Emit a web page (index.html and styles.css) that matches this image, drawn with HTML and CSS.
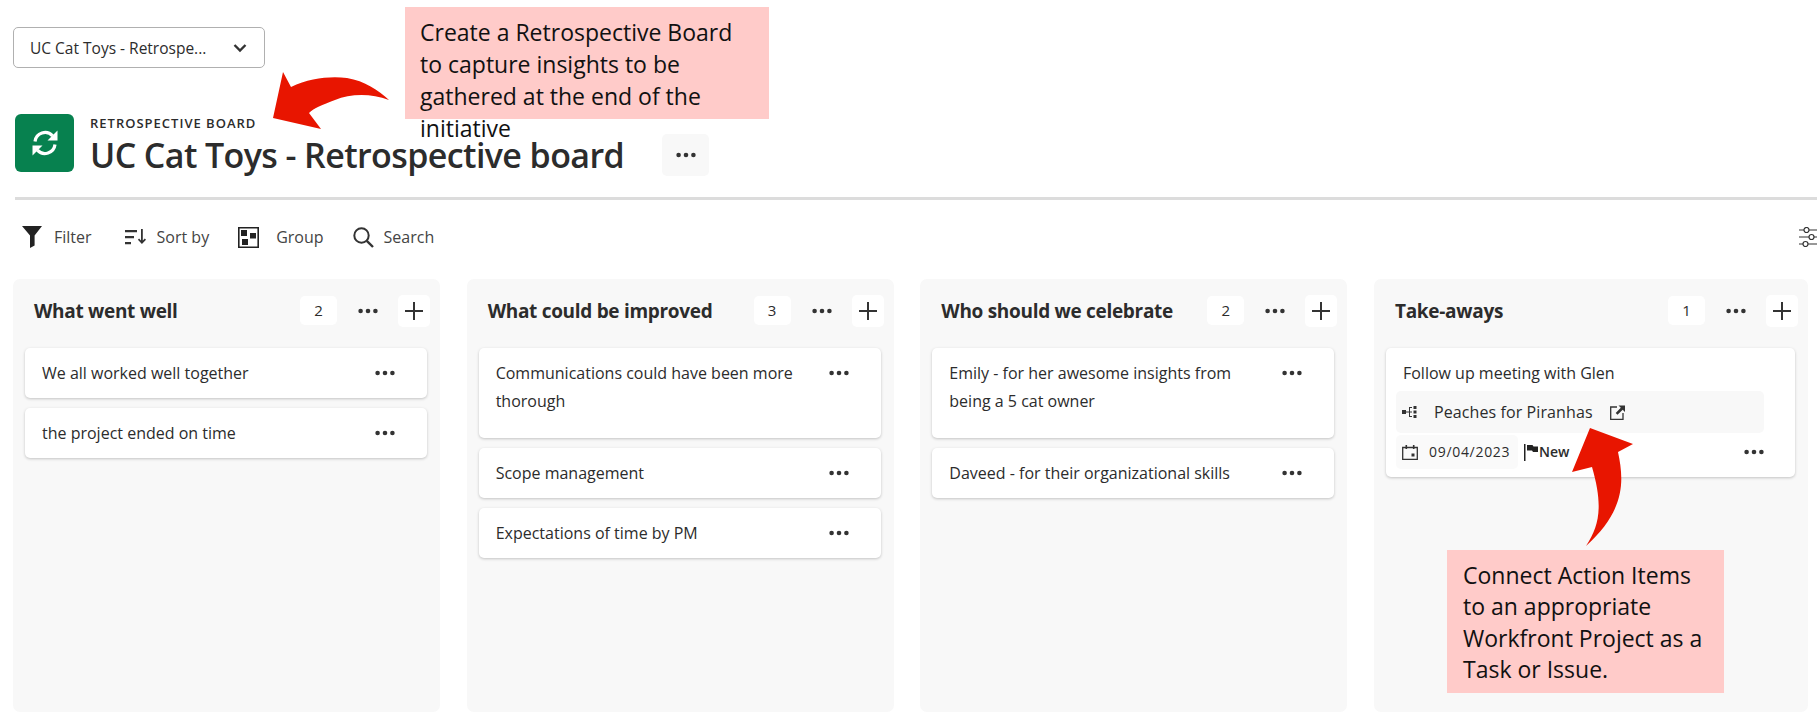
FILE: index.html
```html
<!DOCTYPE html>
<html>
  <head>
    <title>UC Cat Toys - Retrospective board</title>
    <link rel="stylesheet" href="styles.css">
  </head>
  <body>
    <svg class="defs" width="0" height="0">
      <symbol id="dots" viewBox="0 0 20 6">
        <circle cx="2.6" cy="3" r="2.3"/><circle cx="10" cy="3" r="2.3"/><circle cx="17.4" cy="3" r="2.3"/>
      </symbol>
      <symbol id="plus" viewBox="0 0 20 20">
        <path d="M9 1h2v8h8v2h-8v8H9v-8H1V9h8z"/>
      </symbol>
    </svg>

    <div class="picker">
      <span class="picker-text">UC Cat Toys - Retrospe...</span>
      <svg class="chevron" viewBox="0 0 14 10"><path d="M1.5 2 7 7.5 12.5 2" fill="none" stroke="#333" stroke-width="2.4"/></svg>
    </div>

    <div class="board-head">
      <div class="logo">
        <svg viewBox="0 0 28 28" width="28" height="28">
          <path d="M4 12.5A10.2 10.2 0 0 1 21.6 6.8" fill="none" stroke="#fff" stroke-width="3.2"/>
          <path d="M26.5 1.5V11.5H16.5z" fill="#fff"/>
          <path d="M24 15.5A10.2 10.2 0 0 1 6.4 21.2" fill="none" stroke="#fff" stroke-width="3.2"/>
          <path d="M1.5 26.5V16.5H11.5z" fill="#fff"/>
        </svg>
      </div>
      <div class="titles">
        <div class="eyebrow">RETROSPECTIVE BOARD</div>
        <h1>UC Cat Toys - Retrospective board</h1>
      </div>
      <div class="more"><svg class="dots"><use href="#dots"/></svg></div>
    </div>

    <div class="divider"></div>

    <div class="toolbar">
      <div class="tool tool-filter">
        <svg width="20" height="22" viewBox="0 0 20 22"><path d="M0 0h20L12.6 9.4V19.5L8 22V9.4z" fill="#222"/></svg>
        <span>Filter</span>
      </div>
      <div class="tool tool-sort">
        <svg width="21" height="16" viewBox="0 0 21 16"><path d="M0 1h12v2.2H0zM0 7h9v2.2H0zM0 13h6v2.2H0zM16 0h1.8v11.5l2-2 1.2 1.2-4.1 4.3-4-4.3 1.2-1.2 1.9 2z" fill="#333"/></svg>
        <span>Sort by</span>
      </div>
      <div class="tool tool-group">
        <svg width="21" height="21" viewBox="0 0 21 21"><path d="M.8.8h19.4v19.4H.8z" fill="none" stroke="#222" stroke-width="1.6"/><path d="M3 3h6v6H3zM12 6h6v5.500h-6zM4 12h6v6H4z" fill="#222"/></svg>
        <span>Group</span>
      </div>
      <div class="tool tool-search">
        <svg width="21" height="21" viewBox="0 0 21 21"><circle cx="8.500" cy="8.500" r="7.200" fill="none" stroke="#333" stroke-width="2"/><path d="M13.800 13.800 20 20" fill="none" stroke="#333" stroke-width="2.400"/></svg>
        <span>Search</span>
      </div>
      <svg class="tool-settings" width="19" height="20" viewBox="0 0 19 20">
        <g fill="none" stroke="#333" stroke-width="1.200">
          <path d="M0 3h5M10 3h9M0 10h10M15 10h4M0 17h4M9 17h10"/>
          <circle cx="7.500" cy="3" r="2.500"/><circle cx="12.500" cy="10" r="2.500"/><circle cx="6.500" cy="17" r="2.500"/>
        </g>
      </svg>
    </div>

    <div class="board">
      <div class="column">
        <div class="column-head">
          <h2>What went well</h2>
          <span class="count">2</span>
          <svg class="dots"><use href="#dots"/></svg>
          <span class="add"><svg><use href="#plus"/></svg></span>
        </div>
        <div class="card"><p>We all worked well together</p><svg class="dots"><use href="#dots"/></svg></div>
        <div class="card"><p>the project ended on time</p><svg class="dots"><use href="#dots"/></svg></div>
      </div>

      <div class="column">
        <div class="column-head">
          <h2>What could be improved</h2>
          <span class="count">3</span>
          <svg class="dots"><use href="#dots"/></svg>
          <span class="add"><svg><use href="#plus"/></svg></span>
        </div>
        <div class="card card-wrapped"><p>Communications could have been more thorough</p><svg class="dots"><use href="#dots"/></svg></div>
        <div class="card"><p>Scope management</p><svg class="dots"><use href="#dots"/></svg></div>
        <div class="card"><p>Expectations of time by PM</p><svg class="dots"><use href="#dots"/></svg></div>
      </div>

      <div class="column">
        <div class="column-head">
          <h2>Who should we celebrate</h2>
          <span class="count">2</span>
          <svg class="dots"><use href="#dots"/></svg>
          <span class="add"><svg><use href="#plus"/></svg></span>
        </div>
        <div class="card card-wrapped"><p>Emily - for her awesome insights from being a 5 cat owner</p><svg class="dots"><use href="#dots"/></svg></div>
        <div class="card"><p>Daveed - for their organizational skills</p><svg class="dots"><use href="#dots"/></svg></div>
      </div>

      <div class="column">
        <div class="column-head">
          <h2>Take-aways</h2>
          <span class="count">1</span>
          <svg class="dots"><use href="#dots"/></svg>
          <span class="add"><svg><use href="#plus"/></svg></span>
        </div>
        <div class="card card-action">
          <div class="action-title"><p>Follow up meeting with Glen</p></div>
          <div class="action-link">
            <svg width="15" height="12" viewBox="0 0 15 12"><path d="M0 4h4v4H0zM4 5.400h3V1h3v1H8v3.400h2v1.200H8V10h2v1H7V6.600H4zM11.500 0h3v3h-3zM11.500 4.500h3v3h-3zM11.500 9h3v3h-3z" fill="#333"/></svg>
            <span class="link-name">Peaches for Piranhas</span>
            <svg width="15" height="15" viewBox="0 0 15 15"><path d="M7 2H.7v12.300H13V8" fill="none" stroke="#333" stroke-width="1.300"/><path d="M8.500.5H15V7l-2.300-2.300L7.500 9.800 5.700 8l5.100-5.200z" fill="#333"/></svg>
          </div>
          <div class="action-meta">
            <div class="chip">
              <svg width="16" height="15" viewBox="0 0 16 15"><path d="M.7 2.500h14.600v11.800H.7z" fill="none" stroke="#333" stroke-width="1.300"/><path d="M3.500 0h1.600v4H3.500zM10.900 0h1.600v4h-1.600zM9.500 8.500h3v3h-3z" fill="#333"/></svg>
              <span class="date">09/04/2023</span>
            </div>
            <div class="status">
              <svg width="14" height="17" viewBox="0 0 14 17"><path d="M0 0h1.500v17H0z" fill="#222"/><path d="M3 1h5.500l1 1.500H14V8H9L8 6.500H3z" fill="#222"/></svg>
              <span>New</span>
            </div>
            <svg class="dots"><use href="#dots"/></svg>
          </div>
        </div>
      </div>
    </div>

    <!-- annotations on top of the screenshot -->
    <div class="note note-top">Create a Retrospective Board to capture insights to be gathered at the end of the initiative</div>
    <div class="note note-bottom">Connect Action Items to an appropriate Workfront Project as a Task or Issue.</div>
    <svg class="arrows" width="1817" height="712" viewBox="0 0 1817 712">
      <path d="M283 72 291 87C310 78 330 76 347 78 365 81 378 90 389 100 370 93 350 94 335 100 322 105 314 108 309 113L321 129 273 118Z"/>
      <path d="M1590 428 1633 444 1618 452C1624 480 1626 510 1586 546 1600 525 1603 505 1592 467L1572 472Z"/>
    </svg>
  </body>
</html>
```

FILE: styles.css
```css
html, body {
  margin: 0;
  height: 712px;
  overflow: hidden;
}
body {
  position: relative;
  background: #fff;
  color: #2c2c2c;
  font-family: "Open Sans", "Noto Sans", sans-serif;
}
.defs {
  position: absolute;
}
p, h1, h2 {
  margin: 0;
}

/**** top ****/
.picker {
  display: flex;
  align-items: center;
  justify-content: space-between;
  box-sizing: border-box;
  width: 252px;
  height: 41px;
  margin: 27px 0 0 13px;
  padding: 0 16px;
  border: 1.5px solid #b0b0b0;
  border-radius: 5px;
  font-size: 15.5px;
}
.chevron {
  width: 14px;
  height: 10px;
  margin-right: 1px;
}
.board-head {
  display: flex;
  align-items: flex-start;
  margin: 46px 0 0 15px;
  height: 58px;
}
.logo {
  display: flex;
  align-items: center;
  justify-content: center;
  width: 59px;
  height: 58px;
  border-radius: 6px;
  background: #07814f;
}
.titles {
  margin-left: 16px;
  width: 572px;
}
.eyebrow {
  font-size: 13px;
  font-weight: 600;
  line-height: 18px;
  letter-spacing: 1px;
}
h1 {
  font-size: 34px;
  font-weight: 600;
  line-height: 46px;
  letter-spacing: -.6px;
  white-space: nowrap;
}
.more {
  display: flex;
  align-items: center;
  justify-content: center;
  width: 47px;
  height: 42px;
  margin-top: 20px;
  border-radius: 5px;
  background: #f8f8f8;
}
.divider {
  height: 3px;
  margin: 25px 0 0 15px;
  background: #dcdcdc;
}

/**** toolbar ****/
.toolbar {
  display: flex;
  align-items: center;
  height: 74px;
  margin-bottom: 5px;
  padding-left: 22px;
  font-size: 16px;
  color: #444;
}
.tool {
  display: flex;
  align-items: center;
}
.tool-filter svg { margin-right: 12px; }
.tool-filter { margin-right: 33px; }
.tool-sort svg { margin-right: 11px; }
.tool-sort { margin-right: 29px; }
.tool-group svg { margin-right: 17px; }
.tool-group { margin-right: 29px; }
.tool-search svg { margin-right: 10px; }
.tool-settings {
  margin-left: auto;
  flex: none;
  margin-right: -1px;
}

/**** board ****/
.board {
  display: flex;
  gap: 26.67px;
  height: 433px;
  padding: 0 16px 0 13px;
}
.column {
  flex: 0 0 427px;
  box-sizing: border-box;
  padding: 0 13px 0 12px;
  border-radius: 7px;
  background: #f8f8f8;
}
.column-head {
  display: flex;
  align-items: center;
  height: 69px;
  margin-right: -3px;
  padding: 0 0 6px 9px;
  box-sizing: border-box;
}
h2 {
  flex: 1;
  font-size: 19px;
  font-weight: 700;
  letter-spacing: -.3px;
  white-space: nowrap;
}
.count {
  width: 37px;
  height: 29px;
  border-radius: 5px;
  background: #fff;
  font-size: 15px;
  line-height: 29px;
  text-align: center;
}
.column-head .dots {
  margin: 0 20px 0 21px;
}
.add {
  display: flex;
  align-items: center;
  justify-content: center;
  width: 32px;
  height: 32px;
  border-radius: 5px;
  background: #fff;
}
.add svg {
  width: 20px;
  height: 20px;
  fill: #333;
}
.dots {
  flex: none;
  width: 20px;
  height: 6px;
  fill: #333;
}

/**** cards ****/
.card {
  display: flex;
  align-items: flex-start;
  box-sizing: border-box;
  margin-bottom: 10px;
  padding: 11px 32px 11px 17px;
  border-radius: 5px;
  background: #fff;
  box-shadow: 0 1px 3px rgba(0, 0, 0, .22);
  font-size: 16px;
  line-height: 28px;
}
.card p {
  flex: 1;
  padding-right: 24px;
}
.card > .dots {
  margin-top: 11px;
}
.card-wrapped {
  padding-bottom: 23px;
}
.card-action {
  display: block;
  height: 129px;
  padding: 11px 31px 0 10px;
}
.action-title {
  height: 32px;
  padding-left: 7px;
}
.action-link {
  display: flex;
  align-items: center;
  height: 42px;
  width: 368px;
  padding-left: 6px;
  box-sizing: border-box;
  border-radius: 5px;
  background: #f8f8f8;
  line-height: 42px;
}
.link-name {
  margin: 0 17px;
  letter-spacing: .1px;
}
.action-meta {
  display: flex;
  align-items: center;
  height: 34px;
  margin-top: 2px;
}
.chip {
  display: flex;
  align-items: center;
  width: 122px;
  height: 34px;
  padding-left: 6px;
  box-sizing: border-box;
  border-radius: 5px;
  background: #fafafa;
}
.date {
  margin-left: 11px;
  font-size: 14px;
  letter-spacing: .7px;
}
.status {
  display: flex;
  align-items: center;
  flex: 1;
  margin-left: 6px;
  font-size: 14px;
  font-weight: 600;
}
.status svg {
  margin-right: 1px;
}

/**** annotations ****/
.note {
  position: absolute;
  box-sizing: border-box;
  background: #ffcbc9;
  color: #111;
  font-size: 23px;
}
.note-top {
  left: 405px;
  top: 7px;
  width: 364px;
  height: 112px;
  padding: 9px 10px 0 15px;
  line-height: 32px;
}
.note-bottom {
  left: 1447px;
  top: 550px;
  width: 277px;
  height: 143px;
  padding: 10px 10px 0 16px;
  line-height: 31.3px;
}
.arrows {
  position: absolute;
  left: 0;
  top: 0;
  fill: #e81500;
}
```
